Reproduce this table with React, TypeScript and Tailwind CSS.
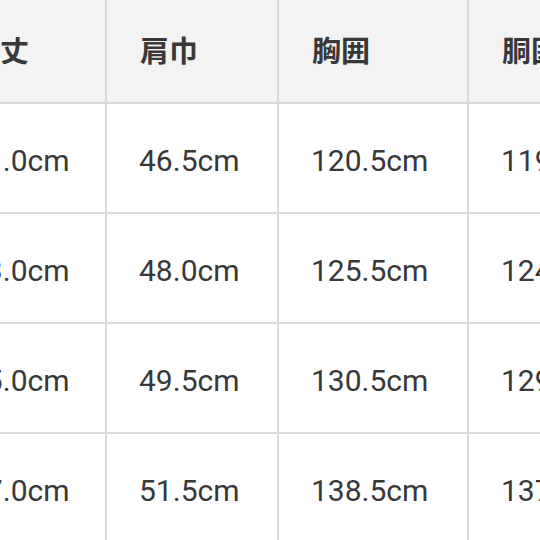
import React from "react";

const headers = ["着丈", "肩巾", "胸囲", "胴囲"];
const rows = [
  ["71.0cm", "46.5cm", "120.5cm", "119.5cm"],
  ["73.0cm", "48.0cm", "125.5cm", "124.5cm"],
  ["75.0cm", "49.5cm", "130.5cm", "129.5cm"],
  ["77.0cm", "51.5cm", "138.5cm", "137.5cm"],
];

export default function App() {
  return (
    <div className="w-[540px] h-[540px] overflow-hidden bg-white">
      <div
        className="-ml-[62px] grid grid-cols-[169px_172px_190px_200px] text-[#383838]"
        style={{ fontFamily: 'Roboto, "Noto Sans CJK JP", sans-serif' }}
      >
        {headers.map((h) => (
          <div
            key={h}
            className="h-[104px] flex items-center pl-[33px] pb-[2px] bg-[#f3f3f3] border-r-2 border-b-2 border-[#d9d9d9] text-[29px] font-bold"
            style={{ fontFamily: '"Noto Sans CJK JP", sans-serif' }}
          >
            {h}
          </div>
        ))}
        {rows.map((r, i) =>
          r.map((c, j) => (
            <div
              key={`${i}-${j}`}
              className={
                j === 0
                  ? "h-[110px] flex items-center pl-[31px] pt-[5px] bg-white border-r-2 border-b-2 border-[#d9d9d9] text-[30px]"
                  : "h-[110px] flex items-center pl-[32px] pt-[5px] bg-white border-r-2 border-b-2 border-[#d9d9d9] text-[30px]"
              }
            >
              {c}
            </div>
          ))
        )}
      </div>
    </div>
  );
}
